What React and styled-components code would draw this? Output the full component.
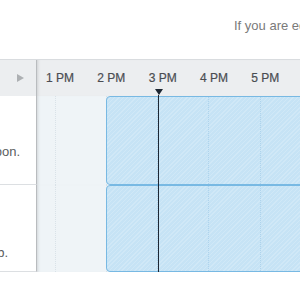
import React from 'react'
import styled, { createGlobalStyle } from 'styled-components'

const GlobalStyle = createGlobalStyle`
  html, body {
    margin: 0;
    padding: 0;
    background: #fff;
    font-family: 'Liberation Sans', Arial, sans-serif;
    overflow: hidden;
  }
`

const SLOT = 51.33

const Page = styled.div`
  width: 300px;
  height: 300px;
  position: relative;
  overflow: hidden;
`

const Notice = styled.div`
  height: 59px;
  box-sizing: border-box;
  padding: 18px 0 0 234px;
  font-size: 13px;
  line-height: 16px;
  color: #7a7a7a;
  white-space: nowrap;
`

const Schedule = styled.div`
  position: relative;
`

const HeaderRow = styled.div`
  display: flex;
  height: 37px;
  box-sizing: border-box;
  border-top: 1px solid #d9dcdf;
  background: #eceef0;
`

const Corner = styled.div`
  width: 37px;
  flex: none;
  display: flex;
  align-items: center;
  justify-content: flex-end;
  padding-right: 12px;
  box-sizing: border-box;
  border-right: 1px solid #b9bcbf;
`

const PlayIcon = styled.span`
  width: 0;
  height: 0;
  border-style: solid;
  border-width: 4.5px 0 4.5px 7px;
  border-color: transparent transparent transparent #adb0b3;
`

const Hours = styled.div`
  flex: 1;
  display: flex;
  box-shadow: inset 3px 0 3px -2px rgba(0, 0, 0, 0.12);
`

const HourLabel = styled.div`
  width: ${SLOT}px;
  flex: none;
  padding-left: 9px;
  box-sizing: border-box;
  display: flex;
  align-items: center;
  font-size: 12px;
  color: #4a4d52;
  white-space: nowrap;
  -webkit-text-stroke: 0.2px #4a4d52;
`

const Row = styled.div`
  display: flex;
  height: ${p => p.$height}px;
`

const Label = styled.div`
  width: 37px;
  flex: none;
  box-sizing: border-box;
  border-right: 1px solid #b9bcbf;
  border-bottom: 1px solid #dcdfe2;
  background: #fff;
  overflow: hidden;
  display: flex;
  justify-content: flex-end;
  padding-top: ${p => p.$top}px;
  padding-right: ${p => p.$right}px;
  font-size: 13px;
  line-height: 16px;
  color: #5a5d60;
  white-space: nowrap;
`

const Track = styled.div`
  flex: 1;
  position: relative;
  overflow: hidden;
  display: flex;
  background: #eff4f7;
  box-shadow: inset 3px 0 3px -2px rgba(0, 0, 0, 0.12);
`

const Lead = styled.div`
  width: 18px;
  flex: none;
`

const Slot = styled.div`
  width: ${SLOT}px;
  flex: none;
  box-sizing: border-box;
  border-left: 1px dotted #d9e2e8;
`

const Booking = styled.div`
  position: absolute;
  left: 69px;
  right: -10px;
  top: 0;
  bottom: 0;
  box-sizing: border-box;
  border: 1px solid #78b9e3;
  border-radius: 4px;
  background-color: #c6e3f5;
  background-image: repeating-linear-gradient(
    -45deg,
    rgba(255, 255, 255, 0.18) 0 1px,
    transparent 1px 3px
  );
`

const BookingSlots = styled.div`
  display: flex;
  height: 100%;
  padding-left: 50px;
`

const BookingSlot = styled.div`
  width: ${SLOT}px;
  flex: none;
  box-sizing: border-box;
  border-left: 1px dotted #aed3ec;
`

const NowMarker = styled.div`
  position: absolute;
  left: 154px;
  top: 30px;
  bottom: 0;
  width: 9px;
  display: flex;
  flex-direction: column;
  align-items: center;
`

const NowHead = styled.span`
  width: 0;
  height: 0;
  border-style: solid;
  border-width: 6px 4.5px 0 4.5px;
  border-color: #1d2733 transparent transparent transparent;
`

const NowLine = styled.span`
  flex: 1;
  width: 1.5px;
  background: #1d2733;
`

const hours = ['1 PM', '2 PM', '3 PM', '4 PM', '5 PM']

const rows = [
  { text: 'Meeting this afternoon.', height: 89, top: 48, right: 16 },
  { text: 'Review on the web.', height: 87, top: 60, right: 28 }
]

export default function App() {
  return (
    <Page>
      <GlobalStyle />
      <Notice>If you are editing this schedule, changes are saved automatically.</Notice>
      <Schedule>
        <HeaderRow>
          <Corner><PlayIcon /></Corner>
          <Hours>
            {hours.map(h => <HourLabel key={h}>{h}</HourLabel>)}
          </Hours>
        </HeaderRow>
        {rows.map((r, i) => (
          <Row key={i} $height={r.height}>
            <Label $top={r.top} $right={r.right}>{r.text}</Label>
            <Track>
              <Lead />
              {hours.map(h => <Slot key={h} />)}
              <Booking>
                <BookingSlots>
                  {hours.slice(0, 4).map(h => <BookingSlot key={h} />)}
                </BookingSlots>
              </Booking>
            </Track>
          </Row>
        ))}
        <NowMarker>
          <NowHead />
          <NowLine />
        </NowMarker>
      </Schedule>
    </Page>
  )
}
